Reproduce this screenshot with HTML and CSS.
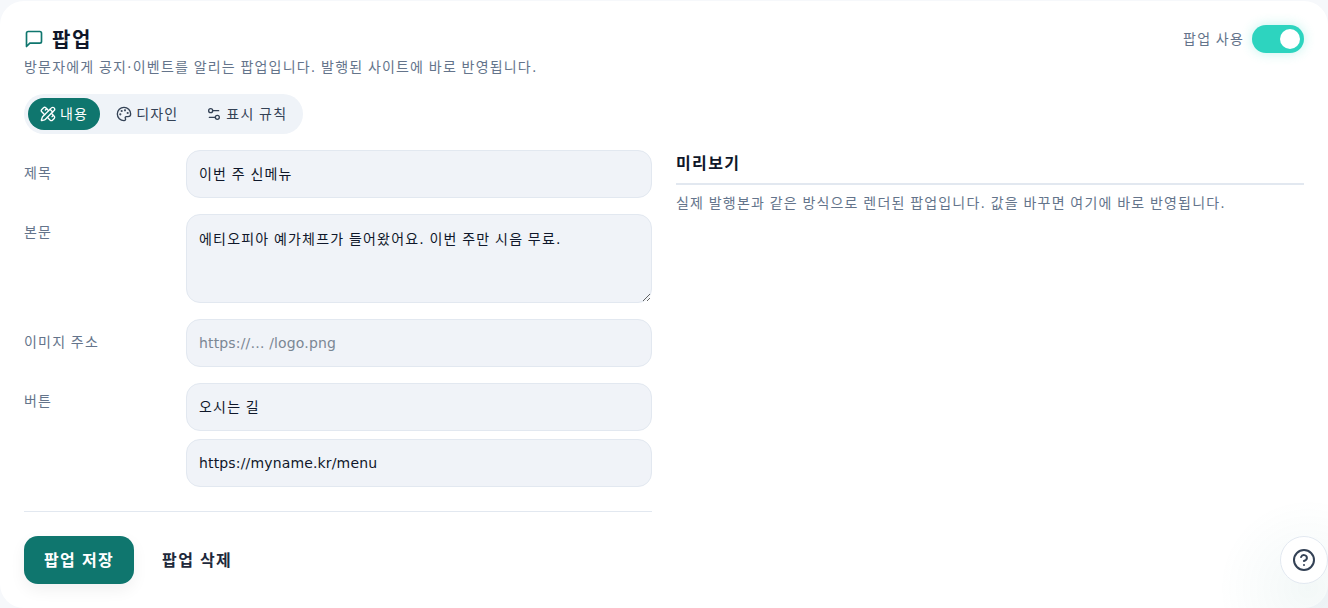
FILE: index.html
```html
<!DOCTYPE html>
<html lang="ko">
<head>
  <meta charset="UTF-8">
  <title>팝업</title>
  <link rel="stylesheet" href="styles.css">
</head>
<body>

  <div class="card">
    <!-- Header -->
    <div class="card-head">
      <div>
        <h2 class="title">
          <svg width="20" height="20" viewBox="0 0 24 24" fill="none" stroke="#0f766e" stroke-width="2" stroke-linecap="round" stroke-linejoin="round"><path d="M21 15a2 2 0 0 1-2 2H7l-4 4V5a2 2 0 0 1 2-2h14a2 2 0 0 1 2 2z"/></svg>
          <span>팝업</span>
        </h2>
        <p class="subtitle">방문자에게 공지·이벤트를 알리는 팝업입니다. 발행된 사이트에 바로 반영됩니다.</p>
      </div>
      <div class="toggle-wrap">
        <span>팝업 사용</span>
        <span class="toggle"><span class="knob"></span></span>
      </div>
    </div>

    <!-- Tabs -->
    <div class="tabs">
      <a class="tab active">
        <svg width="16" height="16" viewBox="0 0 24 24" fill="none" stroke="currentColor" stroke-width="2" stroke-linecap="round" stroke-linejoin="round"><path d="M13 7 8.700 2.700a2.410 2.410 0 0 0-3.400 0L2.700 5.300a2.410 2.410 0 0 0 0 3.400L7 13"/><path d="m8 6 2-2"/><path d="m18 16 2-2"/><path d="m17 11 4.300 4.300c.94.94.94 2.460 0 3.400l-2.600 2.600c-.94.94-2.460.94-3.400 0L11 17"/><path d="M21.174 6.812a1 1 0 0 0-3.986-3.987L3.842 16.174a2 2 0 0 0-.5.83l-1.321 4.352a.5.5 0 0 0 .623.622l4.353-1.320a2 2 0 0 0 .83-.497z"/><path d="m15 5 4 4"/></svg>
        내용
      </a>
      <a class="tab">
        <svg width="16" height="16" viewBox="0 0 24 24" fill="none" stroke="currentColor" stroke-width="2" stroke-linecap="round" stroke-linejoin="round"><path d="M12 22a10 10 0 1 1 10-10c0 2.800-2.200 4-4 4h-2.500a1.800 1.800 0 0 0-1.300 3c.5.600.3 3-2.200 3z"/><circle cx="13.500" cy="6.500" r=".6" fill="currentColor"/><circle cx="17.500" cy="10.500" r=".6" fill="currentColor"/><circle cx="8.500" cy="7.500" r=".6" fill="currentColor"/><circle cx="6.500" cy="12.500" r=".6" fill="currentColor"/></svg>
        디자인
      </a>
      <a class="tab">
        <svg width="16" height="16" viewBox="0 0 24 24" fill="none" stroke="currentColor" stroke-width="2" stroke-linecap="round" stroke-linejoin="round"><path d="M14 17H5"/><path d="M19 7h-9"/><circle cx="17" cy="17" r="3"/><circle cx="7" cy="7" r="3"/></svg>
        표시 규칙
      </a>
    </div>

    <div class="columns">
      <!-- Form -->
      <div class="form-col">
        <div class="row">
          <label class="row-label">제목</label>
          <div class="row-fields"><input class="field" value="이번 주 신메뉴"></div>
        </div>
        <div class="row">
          <label class="row-label top">본문</label>
          <div class="row-fields"><textarea class="field area">에티오피아 예가체프가 들어왔어요. 이번 주만 시음 무료.</textarea></div>
        </div>
        <div class="row">
          <label class="row-label">이미지 주소</label>
          <div class="row-fields"><input class="field latin" placeholder="https://… /logo.png"></div>
        </div>
        <div class="row">
          <label class="row-label top">버튼</label>
          <div class="row-fields">
            <input class="field" value="오시는 길">
            <input class="field latin" value="https://myname.kr/menu">
          </div>
        </div>
      </div>

      <!-- Preview -->
      <div class="preview-col">
        <h3 class="preview-title">미리보기</h3>
        <p class="preview-note">실제 발행본과 같은 방식으로 렌더된 팝업입니다. 값을 바꾸면 여기에 바로 반영됩니다.</p>
      </div>
    </div>

    <div class="actions">
      <button class="btn-save">팝업 저장</button>
      <button class="btn-delete">팝업 삭제</button>
    </div>
  </div>

  <!-- Help -->
  <div class="help-glow"></div>
  <button class="help">
    <svg width="24" height="24" viewBox="0 0 24 24" fill="none" stroke="currentColor" stroke-width="2" stroke-linecap="round" stroke-linejoin="round"><circle cx="12" cy="12" r="10"/><path d="M9.100 9a3 3 0 0 1 5.800 1c0 2-3 3-3 3"/><path d="M12 17h.01"/></svg>
  </button>

</body>
</html>
```
FILE: styles.css
```css
* {
  margin: 0;
  padding: 0;
  box-sizing: border-box;
  letter-spacing: 0.085em; /* hangul sits wide in this design */
  word-spacing: -0.073em;
}

body {
  font-family: "DejaVu Sans", "Noto Sans CJK KR", sans-serif;
  background-color: #f6f8fb;
  color: #0f172a;
  height: 608px;
  overflow: hidden;
  padding-top: 1px;
}

/* Card */
.card {
  background-color: #fff;
  border-radius: 24px;
  padding: 24px;
}

.card-head {
  display: flex;
  justify-content: space-between;
  align-items: flex-start;
}

.title {
  display: flex;
  align-items: center;
  gap: 8px;
  height: 28px;
  font-size: 20px;
  line-height: 28px;
  font-weight: 700;
  color: #0f172a;
}

.title span {
  padding-top: 2px;
}

.subtitle {
  font-size: 14px;
  line-height: 20px;
  color: #64748b;
  margin-top: 4px;
}

.toggle-wrap {
  display: flex;
  align-items: center;
  gap: 8px;
  font-size: 14px;
  color: #64748b;
}

.toggle-wrap span:first-child {
  padding-bottom: 2px;
}

.toggle {
  width: 52px;
  height: 28px;
  border-radius: 14px;
  background-color: #2dd4bf;
  box-shadow: 0 0 12px rgba(45, 212, 191, 0.3);
  padding: 4px;
  display: flex;
  justify-content: flex-end;
}

.knob {
  width: 20px;
  height: 20px;
  border-radius: 50%;
  background-color: #fff;
}

/* Tabs */
.tabs {
  display: inline-flex;
  gap: 4px;
  margin-top: 17px;
  padding: 4px;
  background-color: #eff3f8;
  border-radius: 20px;
}

.tab {
  display: flex;
  align-items: center;
  gap: 4px;
  height: 32px;
  padding: 0 12px 2px;
  border-radius: 16px;
  font-size: 14px;
  color: #334155;
}

.tab svg {
  margin-top: 2px;
}

.tab.active {
  background-color: #0f766e;
  color: #fff;
}

/* Columns */
.columns {
  display: grid;
  grid-template-columns: 628px 1fr;
  gap: 24px;
  margin-top: 16px;
}

.row {
  display: flex;
  margin-bottom: 16px;
}

.row-label {
  width: 162px;
  flex-shrink: 0;
  font-size: 14px;
  color: #64748b;
  padding-top: 13px;
  line-height: 20px;
}

.row-label.top {
  padding-top: 8px;
}

.row-fields {
  flex: 1;
  display: flex;
  flex-direction: column;
  gap: 8px;
}

.field {
  display: block;
  width: 100%;
  height: 48px;
  padding: 0 12px 2px;
  border: 1px solid #e2e8f0;
  border-radius: 14px;
  background-color: #f0f3f8;
  font-family: inherit;
  font-size: 14px;
  color: #0f172a;
}

.field.latin {
  padding-bottom: 0;
  letter-spacing: 0.011em;
  word-spacing: 0;
}

.field::placeholder {
  color: #7b8794;
}

.area {
  height: 89px;
  padding: 14px 12px;
  line-height: 20px;
  resize: vertical;
}

.preview-title {
  font-size: 16px;
  line-height: 24px;
  font-weight: 700;
  padding-top: 2px;
  padding-bottom: 7px;
  border-bottom: 2px solid #e2e8f0;
}

.preview-note {
  font-size: 14px;
  line-height: 20px;
  color: #64748b;
  margin-top: 8px;
}

/* Actions */
.actions {
  width: 628px;
  display: flex;
  align-items: center;
  gap: 4px;
  margin-top: 8px;
  padding-top: 24px;
  border-top: 1px solid #e2e8f0;
}

.btn-save {
  height: 48px;
  padding: 0 20px 2px;
  border: none;
  border-radius: 14px;
  background-color: #0f766e;
  color: #fff;
  font-family: inherit;
  font-size: 16px;
  font-weight: 700;
  box-shadow: 0 6px 16px rgba(15, 23, 42, 0.06);
}

.btn-delete {
  height: 48px;
  padding: 0 24px 2px;
  border: none;
  background: none;
  color: #1e293b;
  font-family: inherit;
  font-size: 16px;
  font-weight: 700;
}

/* Help button */
.help-glow {
  position: fixed;
  right: -70px;
  bottom: -70px;
  width: 180px;
  height: 180px;
  border-radius: 50%;
  background: radial-gradient(circle, rgba(15, 118, 110, 0.05), rgba(15, 118, 110, 0) 70%);
}

.help {
  position: fixed;
  right: 0;
  bottom: 24px;
  width: 48px;
  height: 48px;
  border-radius: 50%;
  border: 1px solid #e2e8f0;
  background-color: #fff;
  color: #334155;
  display: flex;
  align-items: center;
  justify-content: center;
}
```
